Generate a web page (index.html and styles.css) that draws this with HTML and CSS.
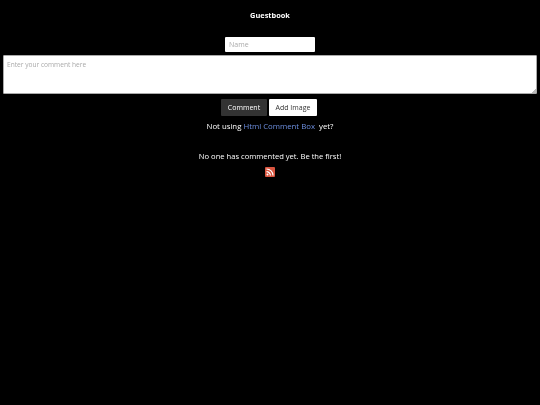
FILE: index.html
```html
<!DOCTYPE html>
<html lang="en">
<head>
  <meta charset="UTF-8">
  <meta name="viewport" content="width=device-width, initial-scale=1.0">
  <title>Guestbook</title>
  <link rel="stylesheet" href="styles.css">
</head>
<body>
  <h1 class="title">Guestbook</h1>
  <form class="comment-form">
    <input class="name-input" type="text" placeholder="Name">
    <textarea class="comment-input" placeholder="Enter your comment here"></textarea>
    <div class="buttons">
      <button type="button" class="btn btn-dark">Comment</button>
      <button type="button" class="btn btn-light">Add Image</button>
    </div>
  </form>
  <p class="promo">Not using <a href="#">Html Comment Box</a> &nbsp;yet?</p>
  <p class="empty">No one has commented yet. Be the first!</p>
  <a class="rss" href="#" aria-label="RSS feed">
    <svg class="rss-icon" viewBox="0 0 10 10" width="10" height="10">
      <rect width="10" height="10" rx="1" fill="#d9553f"/>
      <circle cx="2.5" cy="7.6" r="1" fill="#fff"/>
      <path d="M1.5 4.6a3.9 3.9 0 0 1 3.9 3.9M1.5 2a6.5 6.5 0 0 1 6.5 6.5" fill="none" stroke="#fff" stroke-width="1.2"/>
    </svg>
  </a>
</body>
</html>
```

FILE: styles.css
```css
body {
  margin: 0;
  padding: 0 3px;
  background-color: #000;
  color: #fff;
  font-family: "Open Sans", Inter, sans-serif;
  text-align: center;
  will-change: transform;
}
.title {
  margin: 0;
  padding-top: 10px;
  height: 27px;
  font-size: 7.4px;
  line-height: 10px;
  font-weight: 700;
}
.comment-form {
  display: flex;
  flex-direction: column;
  align-items: center;
}
.name-input {
  box-sizing: border-box;
  width: 90px;
  height: 15px;
  padding: 0 4px;
  border: none;
  border-radius: 1px;
  background-color: #fff;
  font-family: inherit;
  font-size: 7px;
}
.comment-input {
  box-sizing: border-box;
  display: block;
  width: 100%;
  height: 39px;
  margin-top: 3px;
  padding: 4px 3px;
  border: 1px solid #aaa;
  border-radius: 1px;
  background-color: #fff;
  font-family: inherit;
  font-size: 6.6px;
}
.comment-input::-webkit-resizer {
  background: linear-gradient(135deg, transparent 50%, #bbb 50%) right bottom / 4px 4px no-repeat;
}
.name-input::placeholder,
.comment-input::placeholder {
  color: #aaa;
}
.buttons {
  display: flex;
  justify-content: center;
  gap: 2px;
  margin-top: 5px;
}
.btn {
  height: 17px;
  padding: 0;
  border: none;
  border-radius: 1px;
  font-family: inherit;
  font-size: 7px;
}
.btn-dark {
  width: 46px;
  background-color: #333;
  color: #fff;
}
.btn-light {
  width: 48px;
  margin-right: 2px;
  background-color: #fff;
  color: #333;
}
.promo {
  margin: 5px 0 0;
  font-size: 7.8px;
  line-height: 10px;
}
.promo a {
  color: #6d8fe0;
  text-decoration: none;
}
.empty {
  margin: 20px 0 0;
  font-size: 7.6px;
  line-height: 10px;
}
.rss {
  display: block;
  margin-top: 6px;
}
.rss-icon {
  display: block;
  margin: 0 auto;
}
```
